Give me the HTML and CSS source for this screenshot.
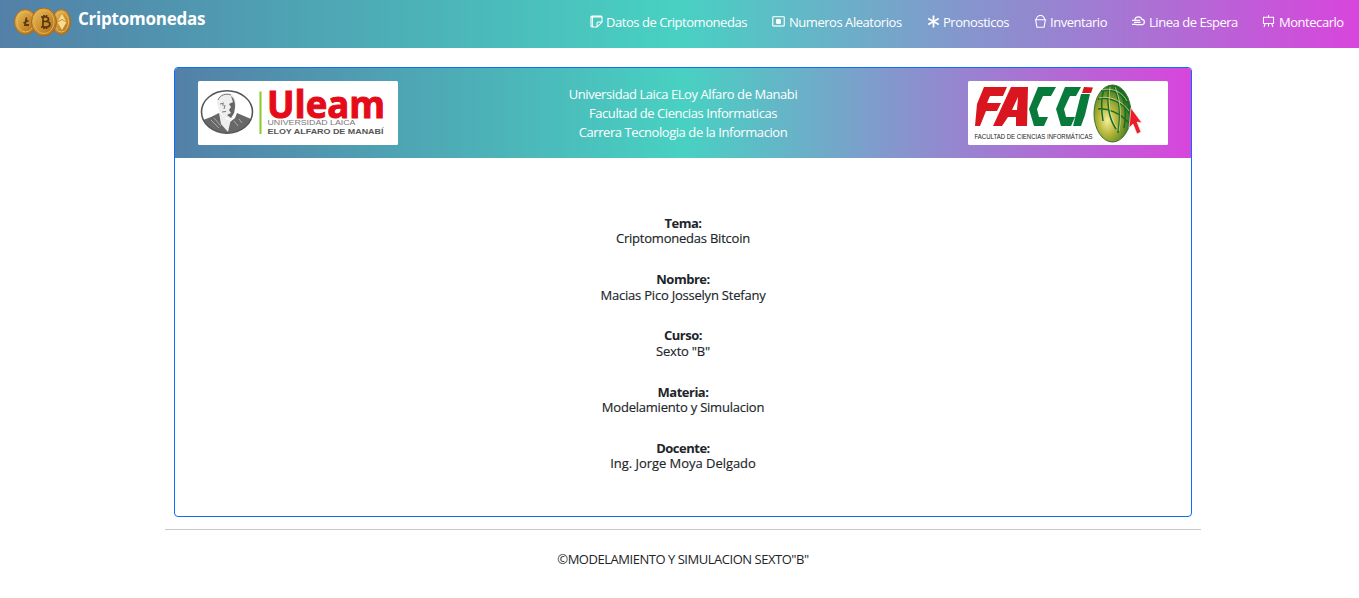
FILE: index.html
```html
<!DOCTYPE html>
<html lang="es">
<head>
<meta charset="utf-8">
<title>Criptomonedas</title>
<link rel="stylesheet" href="styles.css">
</head>
<body>
<nav class="navbar">
  <a class="brand">
    <svg class="coins" width="58" height="30" viewBox="0 0 58 30">
      <defs><linearGradient id="gold" x1="0" y1="0" x2="1" y2="1"><stop offset="0" stop-color="#edc568"/><stop offset=".5" stop-color="#ce9333"/><stop offset="1" stop-color="#a9691b"/></linearGradient></defs>
      <g fill="url(#gold)" stroke="#a66d20"><ellipse cx="11.500" cy="15" rx="11" ry="12.500"/><ellipse cx="47.500" cy="15" rx="9" ry="12.500"/></g>
      <g fill="none" stroke="#e9bb55"><ellipse cx="11.500" cy="15" rx="8.500" ry="10"/><ellipse cx="47.500" cy="15" rx="7" ry="10"/></g>
      <path d="M12.500 10.500 11 18h4M9.500 16l5-2.500" fill="none" stroke="#613a12" stroke-width="1.800"/>
      <path d="m48 7 4.500 8-4.500 8-4.500-8z" fill="#fbdc8e"/><path d="m43.500 15 4.500-2.500 4.500 2.500" fill="none" stroke="#b67b29" stroke-width=".8"/>
      <ellipse cx="30" cy="15" rx="12.500" ry="14" fill="url(#gold)" stroke="#a66a1d"/>
      <ellipse cx="30" cy="15" rx="10" ry="11.500" fill="none" stroke="#e5b14c"/>
      <path d="M27 10h4.500c4 0 4 4.500 0 4.500H29h3.500c4.500 0 4.500 5.500 0 5.500H27M29 10v10M30 8v2M32.500 8v2M30 20v2M32.500 20v2" fill="none" stroke="#573411" stroke-width="1.700"/>
    </svg>
    <span class="brand-name">Criptomonedas</span>
  </a>
  <div class="links">
    <a class="link"><svg class="icon" viewBox="0 0 16 16"><path d="M2.500 1.200h11a1.300 1.300 0 0 1 1.300 1.300v6.200L8.700 14.800H2.500a1.300 1.300 0 0 1-1.300-1.300v-11a1.300 1.300 0 0 1 1.300-1.300zM8.700 14.800V10a1.300 1.300 0 0 1 1.300-1.300h4.800M3 1v14M1 2.500h14" fill="none" stroke="#fff" stroke-width="1.300"/></svg><span>Datos de Criptomonedas</span></a>
    <a class="link"><svg class="icon" viewBox="0 0 16 16"><rect x=".8" y="2" width="14.400" height="11.500" rx="1.500" fill="none" stroke="#fff" stroke-opacity=".8" stroke-width="1.800"/><rect x="5" y="5" width="6" height="6" rx="1.500"/></svg><span class="after-wide">Numeros Aleatorios</span></a>
    <a class="link"><svg class="icon" viewBox="0 0 16 16"><path d="M8 .5v15M1.500 4.250l13 7.500M14.500 4.250l-13 7.500" stroke="#fff" stroke-width="2.200"/></svg><span>Pronosticos</span></a>
    <a class="link"><svg class="icon" viewBox="0 0 16 16"><path d="M3 5.500a5 5 0 0 1 10 0M1 5.800h14M2 6l1.600 9h8.800L14 6" fill="none" stroke="#fff" stroke-width="1.300"/></svg><span>Inventario</span></a>
    <a class="link"><svg class="icon" viewBox="0 0 16 16"><path d="M3.500 5.500a4.600 4.600 0 0 1 8.800 0 3.200 3.200 0 0 1 .5 6.300H5M0 6.500h10M2.500 9h8M0 11.500h5" fill="none" stroke="#fff" stroke-width="1.500"/></svg><span class="after-wide">Linea de Espera</span></a>
    <a class="link"><svg class="icon" viewBox="0 0 16 16"><path d="M1.800 2.800h12.400v7.700H1.800zM8 0v3M4 10.500 2.500 15M12 10.500l1.500 4.500M8 10.500V14" fill="none" stroke="#fff" stroke-width="1.300"/></svg><span class="after-wide">Montecarlo</span></a>
  </div>
</nav>
<main class="card">
  <header class="card-header">
    <svg class="logo" width="200" height="64" viewBox="0 0 200 64">
      <rect width="200" height="64" rx="1.500" fill="#fff"/>
      <clipPath id="medallion"><ellipse cx="29" cy="31" rx="25.500" ry="21.200"/></clipPath>
      <g clip-path="url(#medallion)">
        <path d="M5 39l8-3 8-4 6 6 5 3 5-4 2-5 14 6-5 18H16z" fill="#686868"/>
        <path d="M19 22c0-8 7-12 14-9 4 2 5 6 5 11l-1 8-3 6-7-1-6-7z" fill="#eee"/>
        <path d="M33 15c4 3 5 9 3 17l-3 5-4-3 4-2-2-3 2-3-2-3 4-2z" fill="#666"/>
        <path d="M20 19c2-5 8-7 13-5M22 23l4-1M24 24h2M27 24l-1 4M24 31l4-.5" fill="none" stroke="#777" stroke-width="1"/>
        <path d="m21 32 8 7 4-1-3 13-7-8z" fill="#eee"/>
        <path d="m13 39 8 8M16 37l7 8M41 38l3 4M36 40l4 5" stroke="#aaa"/>
      </g>
      <ellipse cx="29" cy="31" rx="25.500" ry="21.200" fill="none" stroke="#555" stroke-width="1.600"/>
      <path d="M62.500 10.500V53" stroke="#8bc928" stroke-width="2"/>
      <text x="69" y="37.300" class="uleam" textLength="118" lengthAdjust="spacingAndGlyphs">Uleam</text>
      <text x="69.500" y="43.800" class="laica" textLength="88" lengthAdjust="spacingAndGlyphs">UNIVERSIDAD LAICA</text>
      <text x="69.500" y="53" class="eloy" textLength="116" lengthAdjust="spacingAndGlyphs">ELOY ALFARO DE MANABÍ</text>
    </svg>
    <div class="institution"><div>Universidad Laica ELoy Alfaro de Manabi</div><div>Facultad de Ciencias Informaticas</div><div>Carrera Tecnologia de la Informacion</div></div>
    <svg class="logo" width="200" height="64" viewBox="0 0 200 64">
      <defs><radialGradient id="globe" cx=".36" cy=".62" r=".65"><stop offset="0" stop-color="#f5ef9c"/><stop offset=".4" stop-color="#b3b438"/><stop offset=".75" stop-color="#668d28"/><stop offset="1" stop-color="#166b24"/></radialGradient></defs>
      <rect width="200" height="64" rx="1.500" fill="#fff"/>
      <path d="M16 6h23l-4 9H22l-3 7h14l-4 8H18l-6 15H7l2-22zM43 6h17l-1 39H48v-9h-8l-6 9h-9zm7 10-6 13h5z" fill="#d91520"/>
      <path d="M70 6h18l-5 9h-8l-6 13 2 8h9l-4 9H66l-5-17zM97 6h16l-5 9h-6l-6 13 2 8h9l-4 9H93l-5-17zM113 13h9l-5 21-4 11h-8z" fill="#087a3b"/>
      <path d="m116 6 9 .5-2 5.500h-9z" fill="#d91520"/>
      <text x="6.500" y="58" class="faculty" textLength="118" lengthAdjust="spacingAndGlyphs">FACULTAD DE CIENCIAS INFORMÁTICAS</text>
      <ellipse cx="144.500" cy="32.500" rx="18.500" ry="28.500" fill="url(#globe)" stroke="#397330"/>
      <path d="M133 10c11-3 22 3 26 12M130 18c12-3 25 4 31 14M130 28c10-1 22 4 31 14M136 8c-3 9-3 20-1 32M141 6c-2 14-1 30 7 42M146 6c5 11 7 28 4 46M151 9c6 10 8 22 5 38" fill="none" stroke="#176b2b" stroke-width="1.500"/>
      <path d="M134 9c11-3 21 3 25 11M131 17c12-3 24 4 30 13M142 6c-2 14-1 29 7 41M147 6c5 11 7 27 4 44" fill="none" stroke="#dce59a" stroke-width=".7"/>
      <path d="m163 27 11 15-5-1 4 10-4 2-4-10-4 4z" fill="#ed1c29" stroke="#fff" stroke-width=".6"/>
    </svg>
  </header>
  <div class="card-body">
    <section class="entry"><b>Tema:</b><span>Criptomonedas Bitcoin</span></section>
    <section class="entry"><b>Nombre:</b><span>Macias Pico Josselyn Stefany</span></section>
    <section class="entry"><b>Curso:</b><span>Sexto "B"</span></section>
    <section class="entry"><b>Materia:</b><span>Modelamiento y Simulacion</span></section>
    <section class="entry"><b>Docente:</b><span class="teacher">Ing. Jorge Moya Delgado</span></section>
  </div>
</main>
<footer class="footer">©MODELAMIENTO Y SIMULACION SEXTO"B"</footer>
</body>
</html>
```
FILE: styles.css
```css
* { box-sizing: border-box; }
body { margin: 0; background: #fff; color: #212529; font: 13px/19px "Open Sans", "Noto Sans", sans-serif; overflow: hidden; }
.navbar, .card-header { background: linear-gradient(90deg, #5380a8 0%, #48d1c2 50%, #d845dc 100%); color: #fff; }
.navbar { height: 48px; display: flex; justify-content: space-between; }
.brand { display: flex; padding: 7px 0 0 14px; gap: 6px; }
.coins { flex: none; }
.brand-name { font-size: 17px; line-height: 24px; font-weight: 700; letter-spacing: -.23px; }
.links { display: grid; grid-template-columns: 182px 155px 107px 98px 130px 97px; padding-top: 13px; }
.link { display: flex; gap: 3px; white-space: nowrap; letter-spacing: -.46px; }
.after-wide { padding-left: 1px; }
.icon { width: 13px; height: 13px; margin-top: 2px; flex: none; fill: #fff; }
.card { width: 1018px; height: 450px; margin: 19px 0 0 174px; border: 1px solid #0d6efd; border-radius: 4px; overflow: hidden; }
.card-header { height: 90px; display: flex; justify-content: space-between; padding: 13px 23px; }
.logo { flex: none; display: block; }
.institution { text-align: center; padding-top: 4px; white-space: nowrap; letter-spacing: -.43px; }
.card-body { padding-top: 57.8px; }
.entry { height: 56.3px; display: flex; flex-direction: column; align-items: center; line-height: 15.4px; letter-spacing: -.28px; font-weight: 500; }
.entry span { -webkit-text-stroke: .15px #212529; letter-spacing: -.22px; }
.entry b { font-weight: 700; letter-spacing: -.5px; }
.entry .teacher { letter-spacing: -.04px; }
.footer { width: 1036px; margin: 12px 0 0 165px; border-top: 1px solid #c8c9ca; padding-top: 20px; text-align: center; letter-spacing: -.47px; font-weight: 400; }
.uleam { font: 700 37px "Open Sans", sans-serif; fill: #e50b19; stroke: #e50b19; stroke-width: 1; }
.laica { font: 6.500px "Liberation Sans", sans-serif; fill: #777; }
.eloy { font: 700 8px "Liberation Sans", sans-serif; fill: #555; }
.faculty { font: 8px "Liberation Sans", sans-serif; fill: #222; }
```
